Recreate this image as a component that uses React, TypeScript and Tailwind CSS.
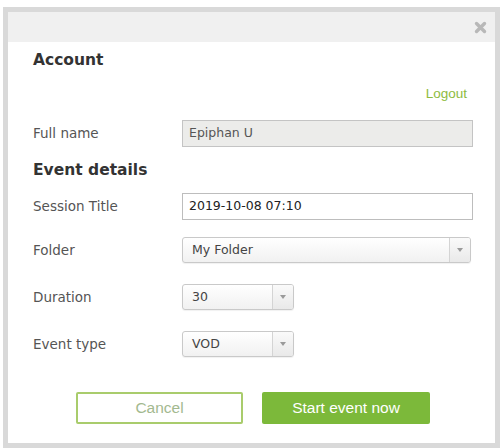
import React from "react";

function Arrow() {
  return (
    <div className="flex w-[21px] items-center justify-center self-stretch border-l border-[#d4d4d4] bg-gradient-to-b from-[#fafafa] to-[#e9e9e9]">
      <svg width="6" height="4" viewBox="0 0 6 4">
        <path d="M0 0 L6 0 L3 4 Z" fill="#9a9a9a" />
      </svg>
    </div>
  );
}

function Select({ value, width }: { value: string; width: string }) {
  return (
    <div
      className={`flex h-[26px] ${width} items-stretch overflow-hidden rounded-[3px] border border-[#c9c9c9] bg-gradient-to-b from-white to-[#f1f1f1] shadow-[0_1px_1px_rgba(0,0,0,0.06)]`}
    >
      <div className="flex flex-1 items-center pl-[9px] text-[12.5px] text-[#444]">{value}</div>
      <Arrow />
    </div>
  );
}

export default function App() {
  const font = { fontFamily: '"DejaVu Sans", Verdana, sans-serif' };
  return (
    <div className="h-[448px] w-[503px] overflow-hidden bg-white pl-[3px] pt-[7px]" style={font}>
      <div className="flex h-[441px] w-[497px] flex-col border-[5px] border-[#d9d9d9] bg-white">
        <div className="flex h-[30px] shrink-0 items-center justify-end bg-[#f0f0f0] pr-[8px]">
          <svg width="13" height="13" viewBox="0 0 13 13">
            <path d="M2.5 2.5 L10.5 10.5 M10.5 2.5 L2.5 10.5" stroke="#b8b8b8" strokeWidth="3.4" strokeLinecap="round" />
          </svg>
        </div>
        <div className="flex flex-col pl-[25px] pr-[22px]">
          <div className="mt-[9px] text-[15.5px] font-bold leading-[18px] text-[#333]">Account</div>
          <div
            className="mt-[17px] self-end pr-[6px] text-[13.5px] leading-[16px] text-[#8dbb3e]"
            style={{ fontFamily: '"Liberation Sans", Arial, sans-serif' }}
          >
            Logout
          </div>
          <div className="mt-[18px] flex items-center">
            <div className="w-[149px] text-[13.5px] text-[#555]">Full name</div>
            <div className="flex h-[27px] w-[291px] items-center border border-[#c4c4c4] bg-[#ececea] pl-[6px] text-[12.5px] text-[#555]">
              Epiphan U
            </div>
          </div>
          <div className="mt-[14px] text-[15.5px] font-bold leading-[18px] text-[#333]">Event details</div>
          <div className="mt-[14px] flex items-center">
            <div className="w-[149px] text-[13.5px] text-[#555]">Session Title</div>
            <div className="flex h-[27px] w-[291px] items-center border border-[#bdbdbd] bg-white pl-[6px] text-[12.5px] text-[#222]">
              2019-10-08 07:10
            </div>
          </div>
          <div className="mt-[17px] flex items-center">
            <div className="w-[149px] text-[13.5px] text-[#555]">Folder</div>
            <Select value="My Folder" width="w-[289px]" />
          </div>
          <div className="mt-[21px] flex items-center">
            <div className="w-[149px] text-[13.5px] text-[#555]">Duration</div>
            <Select value="30" width="w-[112px]" />
          </div>
          <div className="mt-[21px] flex items-center">
            <div className="w-[149px] text-[13.5px] text-[#555]">Event type</div>
            <Select value="VOD" width="w-[112px]" />
          </div>
          <div
            className="mt-[35px] flex gap-[19px] pl-[43px]"
            style={{ fontFamily: '"Liberation Sans", Arial, sans-serif' }}
          >
            <div className="flex h-[32px] w-[167px] items-center justify-center rounded-[2px] border-2 border-[#a9cc6c] bg-white text-[15.5px] text-[#a3b98f]">
              Cancel
            </div>
            <div className="flex h-[32px] w-[168px] items-center justify-center rounded-[2px] bg-[#7cb93a] text-[15.5px] text-white">
              Start event now
            </div>
          </div>
        </div>
      </div>
    </div>
  );
}
